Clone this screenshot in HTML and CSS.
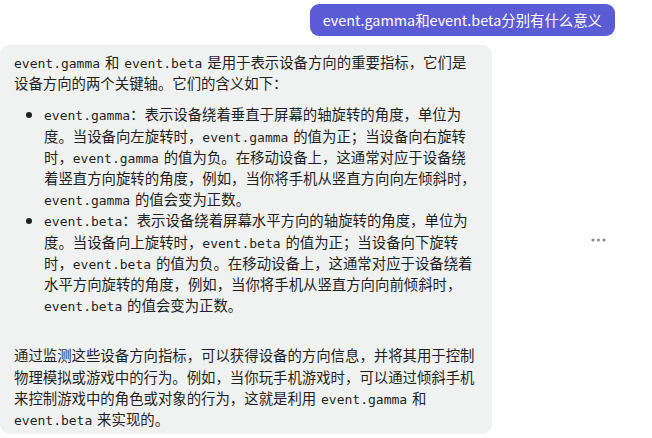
FILE: index.html
```html
<!DOCTYPE html>
<html lang="zh-CN">
<head>
<meta charset="utf-8">
<link rel="stylesheet" href="styles.css">
</head>
<body>
<div class="chat">
  <div class="row-user">
    <div class="user-bubble">event.gamma和event.beta分别有什么意义</div>
  </div>
  <div class="row-bot">
    <div class="bot-bubble">
      <p class="para"><code>event.gamma</code> 和 <code>event.beta</code> 是用于表示设备方向的重要指标，它们是设备方向的两个关键轴。它们的含义如下：</p>
      <ul class="list">
        <li><code>event.gamma</code>：表示设备绕着垂直于屏幕的轴旋转的角度，单位为度。当设备向左旋转时，<code>event.gamma</code> 的值为正；当设备向右旋转时，<code>event.gamma</code> 的值为负。在移动设备上，这通常对应于设备绕着竖直方向旋转的角度，例如，当你将手机从竖直方向向左倾斜时，<code>event.gamma</code> 的值会变为正数。</li>
        <li><code>event.beta</code>：表示设备绕着屏幕水平方向的轴旋转的角度，单位为度。当设备向上旋转时，<code>event.beta</code> 的值为正；当设备向下旋转时，<code>event.beta</code> 的值为负。在移动设备上，这通常对应于设备绕着水平方向旋转的角度，例如，当你将手机从竖直方向向前倾斜时，<code>event.beta</code> 的值会变为正数。</li>
      </ul>
      <p class="para">通过监测这些设备方向指标，可以获得设备的方向信息，并将其用于控制物理模拟或游戏中的行为。例如，当你玩手机游戏时，可以通过倾斜手机来控制游戏中的角色或对象的行为，这就是利用 <code>event.gamma</code> 和 <code>event.beta</code> 来实现的。</p>
    </div>
    <div class="more">
      <svg width="16" height="4" viewBox="0 0 16 4"><circle cx="2" cy="2" r="1.5"/><circle cx="7.5" cy="2" r="1.5"/><circle cx="13" cy="2" r="1.5"/></svg>
    </div>
  </div>
</div>
</body>
</html>
```
FILE: styles.css
```css
html, body {
  margin: 0;
  padding: 0;
  background: #ffffff;
}
.chat {
  padding-top: 4px;
  font-family: "Noto Sans CJK SC", "Noto Sans", sans-serif;
  color: #1f1f1f;
}
.row-user {
  display: flex;
  justify-content: flex-end;
  padding-right: 37px;
}
.user-bubble {
  background: #5b5bd6;
  color: #ffffff;
  font-size: 14.4px;
  line-height: 32px;
  height: 32px;
  padding: 0 13px;
  border-radius: 9px;
}
.row-bot {
  display: flex;
  align-items: center;
  margin-top: 9px;
}
.bot-bubble {
  width: 462px;
  flex: none;
  background: #f0f2f2;
  border-radius: 10px;
  padding: 6px 16px 5px 14px;
  font-size: 14.4px;
  line-height: 21.2px;
  word-spacing: 1.6px;
}
.para {
  margin: 0;
}
.list {
  margin: 10px 0 29px 0;
  padding-left: 30px;
}
code {
  font-family: "DejaVu Sans Mono", monospace;
  font-size: 13px;
  line-height: 1;
  word-spacing: 0;
}
.more {
  margin-left: 99px;
  display: flex;
}
.more svg {
  fill: #8a8a8a;
}
```
